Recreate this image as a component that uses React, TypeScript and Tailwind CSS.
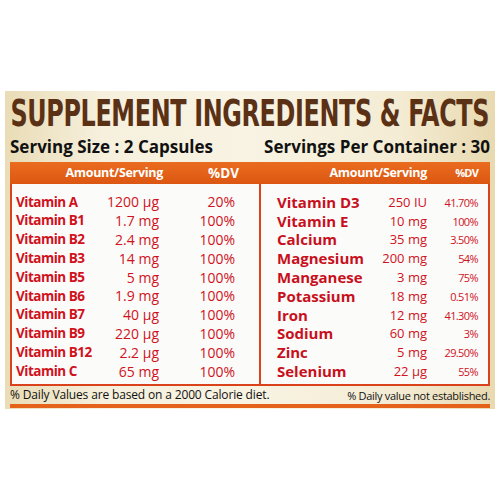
import React, { useLayoutEffect, useRef, useState } from "react";

const left = [
  ["Vitamin A", "1200 µg", "20%"],
  ["Vitamin B1", "1.7 mg", "100%"],
  ["Vitamin B2", "2.4 mg", "100%"],
  ["Vitamin B3", "14 mg", "100%"],
  ["Vitamin B5", "5 mg", "100%"],
  ["Vitamin B6", "1.9 mg", "100%"],
  ["Vitamin B7", "40 µg", "100%"],
  ["Vitamin B9", "220 µg", "100%"],
  ["Vitamin B12", "2.2 µg", "100%"],
  ["Vitamin C", "65 mg", "100%"],
];

const right = [
  ["Vitamin D3", "250 IU", "41.70%"],
  ["Vitamin E", "10 mg", "100%"],
  ["Calcium", "35 mg", "3.50%"],
  ["Magnesium", "200 mg", "54%"],
  ["Manganese", "3 mg", "75%"],
  ["Potassium", "18 mg", "0.51%"],
  ["Iron", "12 mg", "41.30%"],
  ["Sodium", "60 mg", "3%"],
  ["Zinc", "5 mg", "29.50%"],
  ["Selenium", "22 µg", "55%"],
];

function FitTitle() {
  const ref = useRef<HTMLSpanElement>(null);
  const [s, setS] = useState(0.7);
  useLayoutEffect(() => {
    if (ref.current) {
      const w = ref.current.offsetWidth;
      if (w > 0) setS(479 / w);
    }
  }, []);
  return (
    <div className="h-[45px] w-[490px] flex items-center justify-center overflow-hidden">
      <span
        ref={ref}
        className="inline-block shrink-0 text-[37px] leading-none font-bold text-[#5b3116] font-['DejaVu_Sans_Condensed','DejaVu_Sans',sans-serif] whitespace-nowrap tracking-[-0.5px]"
        style={{ transform: `scaleX(${s})` }}
      >
        SUPPLEMENT INGREDIENTS &amp; FACTS
      </span>
    </div>
  );
}

export default function App() {
  return (
    <div className="w-[500px] h-[500px] bg-white pt-[91px] px-[5px] font-['Open_Sans',sans-serif]">
      <div className="h-[318px] flex flex-col bg-[linear-gradient(90deg,#e9dcb6_0%,#f6f0dd_20%,#f8f3e3_50%,#f4ecd4_80%,#e8d9b0_100%)]">
        <FitTitle />
        <div className="h-[21px] flex items-center justify-between px-[5px] text-[17px] font-bold text-[#111] leading-none">
          <span>Serving Size : 2 Capsules</span>
          <span>Servings Per Container : 30</span>
        </div>
        <div className="mx-[5px] mt-[5px]">
          <div className="h-[22px] flex bg-[linear-gradient(180deg,#ea6c1f,#dc5712)] text-white font-bold">
            <div className="w-[251px] flex items-center">
              <span className="w-[153px] text-right text-[12.5px] tracking-[-0.3px]">Amount/Serving</span>
              <span className="w-[76px] text-right text-[13.5px]">%DV</span>
            </div>
            <div className="flex-1 flex items-center">
              <span className="w-[166px] text-right text-[12.5px] tracking-[-0.3px]">Amount/Serving</span>
              <span className="w-[51px] text-right text-[11px] tracking-[-0.8px]">%DV</span>
            </div>
          </div>
          <div className="flex border-2 border-t-0 border-[#d9421a] bg-[#fbfbfa] h-[202px]">
            <div className="w-[249px] border-r-2 border-[#d9421a] pt-[9px] text-[#d0121c]">
              {left.map(([n, a, d]) => (
                <div key={n} className="h-[18.8px] flex items-center leading-none">
                  <span className="w-[88px] pl-[4px] font-bold text-[13.5px] tracking-[-0.5px] whitespace-nowrap">{n}</span>
                  <span className="w-[59px] text-right text-[14px]">{a}</span>
                  <span className="w-[76px] text-right text-[14px]">{d}</span>
                </div>
              ))}
            </div>
            <div className="flex-1 pt-[9px] text-[#d0121c]">
              {right.map(([n, a, d]) => (
                <div key={n} className="h-[18.8px] flex items-center leading-none">
                  <span className="w-[110px] pl-[16px] font-bold text-[15px] text-[#c8101c] whitespace-nowrap">{n}</span>
                  <span className="w-[56px] text-right text-[13px]">{a}</span>
                  <span className="w-[51px] text-right text-[11px] tracking-[-0.6px]">{d}</span>
                </div>
              ))}
            </div>
          </div>
        </div>
        <div className="h-[18px] flex items-center justify-between px-[5px] text-[#111] leading-none">
          <span className="text-[12px] tracking-[-0.15px]">% Daily Values are based on a 2000 Calorie diet.</span>
          <span className="text-[11px] tracking-[-0.3px]">% Daily value not established.</span>
        </div>
        <div className="mx-[5px] h-[4px] bg-[#e5621a]"></div>
      </div>
    </div>
  );
}
